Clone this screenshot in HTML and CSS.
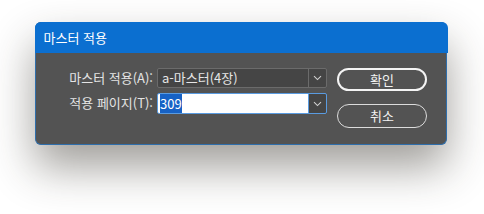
FILE: index.html
```html
<!DOCTYPE html>
<html lang="ko">
<head>
	<meta charset="UTF-8">
	<title>마스터 적용</title>
	<link rel="stylesheet" href="styles.css">
</head>
<body>
	<div class="dialog">
		<div class="titlebar">마스터 적용</div>
		<div class="content">
			<div class="form">
				<label class="label">마스터 적용(A):</label>
				<div class="combo">
					<div class="field">a-마스터(4장)</div>
					<div class="arrow">
						<svg width="9" height="6" viewBox="0 0 9 6"><path d="M1 1.2 L4.5 4.6 L8 1.2" fill="none" stroke="#d0d0d0" stroke-width="1.1"/></svg>
					</div>
				</div>
				<label class="label">적용 페이지(T):</label>
				<div class="combo active">
					<div class="field"><span class="sel">309</span></div>
					<div class="arrow">
						<svg width="9" height="6" viewBox="0 0 9 6"><path d="M1 1.2 L4.5 4.6 L8 1.2" fill="none" stroke="#d0d0d0" stroke-width="1.1"/></svg>
					</div>
				</div>
			</div>
			<div class="buttons">
				<a href="javascript:;" class="btn primary">확인</a>
				<a href="javascript:;" class="btn">취소</a>
			</div>
		</div>
	</div>
</body>
</html>
```

FILE: styles.css
```css
html {
	background: #fff;
}
body {
	margin: 0;
	min-height: 214px;
	box-sizing: border-box;
	padding: 22px 0 0 35px;
	font-family: "Noto Sans CJK KR", "Noto Sans", sans-serif;
	font-size: 13px;
	color: #e8e8e8;
}
.dialog {
	position: relative;
	width: 412px;
	height: 123px;
	box-sizing: border-box;
	border: 1.5px solid #2f6eab;
	border-top: none;
	border-radius: 6px;
	background: #535353;
	box-shadow: 0 22px 44px rgba(45, 40, 32, 0.45);
}
.titlebar {
	height: 31px;
	line-height: 31px;
	padding-left: 9px;
	margin: 0 -1.5px;
	border-radius: 6px 6px 0 0;
	background: #0b6fd0;
	color: #fff;
}
.content {
	display: flex;
	padding: 15px 0 0 0;
}
.form {
	display: grid;
	grid-template-columns: 117px 170px;
	grid-template-rows: 20px 21px;
	column-gap: 4px;
	row-gap: 5px;
}
.label {
	text-align: right;
	line-height: 20px;
	color: #e4e4e4;
	white-space: nowrap;
}
.combo {
	display: flex;
	box-sizing: border-box;
	border: 1px solid #6b6b6b;
	border-radius: 2px;
	background: #454545;
	overflow: hidden;
}
.combo .field {
	flex: 1;
	padding-left: 4px;
	line-height: 18px;
	color: #e6e6e6;
	border-right: 1px solid #6b6b6b;
	white-space: nowrap;
}
.combo .arrow {
	width: 17px;
	display: flex;
	align-items: center;
	justify-content: center;
}
.combo.active {
	border-color: #5a9be0;
}
.combo.active .field {
	background: #fff;
	border-right: 1px solid #5a9be0;
	padding-left: 2px;
	line-height: 19px;
}
.sel {
	background: #1762c5;
	color: #fff;
	padding: 1px 0;
}
.buttons {
	display: flex;
	flex-direction: column;
	margin-left: 10px;
	gap: 13px;
}
.btn {
	display: block;
	width: 90px;
	height: 24px;
	box-sizing: border-box;
	border: 1px solid #dcdcdc;
	border-radius: 12px;
	text-align: center;
	line-height: 22px;
	color: #f2f2f2;
	text-decoration: none;
}
.btn.primary {
	border: 2px solid #f4f4f4;
	line-height: 20px;
	height: 23px;
}
```
